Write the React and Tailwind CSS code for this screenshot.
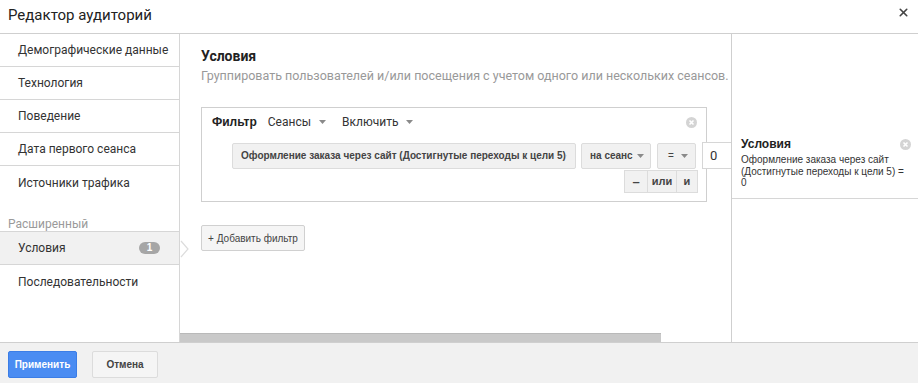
import { X } from "lucide-react";

const Caret = ({ className = "" }) => (
  <svg width="7" height="4" viewBox="0 0 7 4" className={className}>
    <path d="M0 0 L7 0 L3.5 4 Z" fill="#8a8a8a" />
  </svg>
);

const CloseDot = ({ className = "" }) => (
  <svg width="11" height="11" viewBox="0 0 11 11" className={className}>
    <circle cx="5.5" cy="5.5" r="5.5" fill="#d4d4d4" />
    <path d="M3.5 3.5 L7.5 7.5 M7.5 3.5 L3.5 7.5" stroke="#fff" strokeWidth="1.6" />
  </svg>
);

const navTop = ["Демографические данные", "Технология", "Поведение", "Дата первого сеанса"];

const Sidebar = () => (
  <div className="w-[180px] shrink-0 border-r border-[#d6d6d6] relative font-['Roboto',sans-serif] text-[12px] text-[#333] whitespace-nowrap">
    {navTop.map((t) => (
      <div key={t} className="h-[33px] flex items-center pl-[18px] border-b border-[#d6d6d6]">
        {t}
      </div>
    ))}
    <div className="h-[33px] flex items-center pl-[18px]">Источники трафика</div>
    <div className="h-[33px] flex items-end pl-[8px] leading-[14px] text-[#9a9a9a] border-b border-[#d6d6d6]">
      Расширенный
    </div>
    <div className="h-[33px] flex items-center justify-between pl-[18px] pr-[19px] bg-[#f1f1f1] border-b border-[#d6d6d6]">
      <span>Условия</span>
      <span className="w-[21px] h-[12px] rounded-full bg-[#a6a6a6] text-white text-[10px] font-bold leading-[12px] text-center font-['Liberation_Sans',sans-serif]">
        1
      </span>
    </div>
    <div className="h-[33px] flex items-center pl-[18px]">Последовательности</div>
    <svg width="10" height="18" viewBox="0 0 10 18" className="absolute left-[180px] top-[206px]">
      <path d="M1 1 L8 9 L1 17" fill="none" stroke="#dcdcdc" strokeWidth="1.2" />
    </svg>
  </div>
);

const GrayBox = ({ children, className = "" }) => (
  <div
    className={`shrink-0 h-[26px] flex items-center justify-between bg-[#f1f1f1] border border-[#dcdcdc] rounded-[2px] text-[10px] font-bold text-[#444] font-['Liberation_Sans',sans-serif] ${className}`}
  >
    {children}
  </div>
);

const Main = () => (
  <div className="flex-1 min-w-0 flex flex-col overflow-hidden border-r border-[#cfcfcf]">
    <div className="flex-1 pl-[21px] pt-[12px] whitespace-nowrap">
      <div className="text-[14px] font-bold leading-[20px] text-[#222] font-['Roboto',sans-serif]">Условия</div>
      <div className="text-[12.5px] leading-[20px] text-[#999] font-['Roboto',sans-serif]">
        Группировать пользователей и/или посещения с учетом одного или нескольких сеансов.
      </div>

      <div className="mt-[21px] w-[506px] h-[95px] border border-[#cfcfcf] font-['Liberation_Sans',sans-serif]">
        <div className="flex items-center h-[16px] mt-[6px] pl-[10px] pr-[9px] text-[12px] text-[#333]">
          <span className="font-bold text-[#222]">Фильтр</span>
          <span className="ml-[11px] font-['Roboto',sans-serif]">Сеансы</span>
          <Caret className="ml-[8px]" />
          <span className="ml-[16px] font-['Roboto',sans-serif]">Включить</span>
          <Caret className="ml-[8px]" />
          <CloseDot className="ml-auto" />
        </div>
        <div className="flex items-center mt-[12px] pl-[30px] gap-[5px]">
          <GrayBox className="w-[344px] pl-[8px] pr-[8px]">
            <span>Оформление заказа через сайт (Достигнутые переходы к цели 5)</span>
            <Caret />
          </GrayBox>
          <GrayBox className="w-[70px] pl-[8px] pr-[6px]">
            <span>на сеанс</span>
            <Caret />
          </GrayBox>
          <GrayBox className="w-[39px] ml-[1px] pl-[10px] pr-[7px] font-normal">
            <span>=</span>
            <Caret />
          </GrayBox>
          <div className="shrink-0 w-[36px] h-[27px] ml-[1px] border border-[#d6d6d6] bg-white text-[13px] text-[#333] pl-[7px] flex items-center font-['Roboto',sans-serif]">
            0
          </div>
        </div>
        <div className="flex justify-start pl-[422px] mt-[1px] h-[23px] text-[11px] font-bold text-[#444]">
          <div className="w-[24px] bg-[#f1f1f1] border border-[#dcdcdc] flex items-center justify-center text-[13px]">–</div>
          <div className="w-[29px] bg-[#f1f1f1] border border-l-0 border-[#dcdcdc] flex items-center justify-center">или</div>
          <div className="w-[21px] bg-[#f1f1f1] border border-l-0 border-[#dcdcdc] flex items-center justify-center">и</div>
        </div>
      </div>

      <button className="mt-[23px] h-[26px] w-[104px] border border-[#d0d0d0] rounded-[2px] bg-[#f5f5f5] text-[10px] text-[#444] font-['Liberation_Sans',sans-serif]">
        + Добавить фильтр
      </button>
    </div>
    <div className="h-[9px] flex shrink-0">
      <div className="w-[481px] bg-[#c9c9c9] border-t border-[#b9b9b9]"></div>
      <div className="flex-1 bg-white"></div>
    </div>
  </div>
);

const Summary = () => (
  <div className="w-[186px] shrink-0 font-['Liberation_Sans',sans-serif]">
    <div className="mt-[100px] pl-[9px] pr-[7px] pt-[2px] pb-[9px] border-b border-[#d6d6d6]">
      <div className="flex items-center justify-between h-[16px]">
        <span className="text-[12px] font-bold text-[#222]">Условия</span>
        <CloseDot />
      </div>
      <div className="mt-[2px] text-[10px] leading-[11.5px] text-[#333]">
        Оформление заказа через сайт
        <br />
        (Достигнутые переходы к цели 5) =
        <br />0
      </div>
    </div>
  </div>
);

export default function App() {
  return (
    <div className="w-[918px] h-[383px] flex flex-col bg-white overflow-hidden">
      <div className="h-[34px] shrink-0 flex items-center justify-between pl-[8px] pr-[8px] border-b border-[#cfcfcf]">
        <span className="text-[15px] text-[#222] font-['Roboto',sans-serif] -mt-[3px]">Редактор аудиторий</span>
        <X size={13} strokeWidth={3} className="text-[#444] -mt-[8px]" />
      </div>
      <div className="flex-1 min-h-0 flex border-b border-[#cfcfcf]">
        <Sidebar />
        <Main />
        <Summary />
      </div>
      <div className="h-[40px] shrink-0 bg-[#f1f1f1] flex items-center pl-[8px] gap-[15px] pt-[3px] font-['Liberation_Sans',sans-serif]">
        <button className="w-[69px] h-[27px] rounded-[2px] bg-[#4a8cf2] border border-[#3b7de6] text-white text-[10px] font-bold">
          Применить
        </button>
        <button className="w-[66px] h-[27px] rounded-[2px] bg-[#f5f5f5] border border-[#dcdcdc] text-[#444] text-[10px] font-bold">
          Отмена
        </button>
      </div>
    </div>
  );
}
